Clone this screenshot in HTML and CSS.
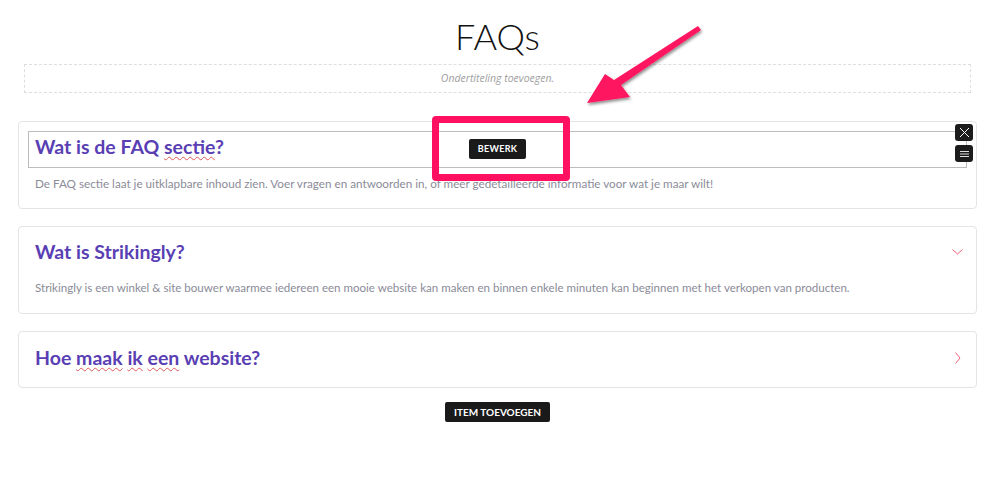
FILE: index.html
```html
<!DOCTYPE html>
<html lang="nl">
<head>
<meta charset="utf-8">
<title>FAQs</title>
<link rel="stylesheet" href="styles.css">
</head>
<body>
<div class="page">
  <h1 class="title">FAQs</h1>
  <div class="subtitle">Ondertiteling toevoegen.</div>

  <div class="list">
    <div class="card card-active">
      <div class="edit-box">
        <h2 class="q">Wat is de FAQ <span class="typo">sectie</span>?</h2>
        <span class="btn bewerk">BEWERK</span>
      </div>
      <p class="a">De FAQ sectie laat je uitklapbare inhoud zien. Voer vragen en antwoorden in, of meer gedetailleerde informatie voor wat je maar wilt!</p>
      <div class="tools">
        <span class="tool"><svg width="11" height="11" viewBox="0 0 11 11"><path d="M1 1L10 10M10 1L1 10" stroke="#fff" stroke-width="1"/></svg></span>
        <span class="tool"><svg width="9" height="8" viewBox="0 0 9 8"><path d="M0 1.5H9M0 4H9M0 6.5H9" stroke="#ddd" stroke-width="1.2"/></svg></span>
      </div>
      <div class="highlight"></div>
    </div>

    <div class="card card-open">
      <div class="row">
        <h2 class="q">Wat is Strikingly?</h2>
        <svg class="chev" width="11" height="6" viewBox="0 0 11 6"><path d="M0.5 0.5L5.5 5L10.5 0.5" fill="none" stroke="#f0607a" stroke-width="1"/></svg>
      </div>
      <p class="a">Strikingly is een winkel &amp; site bouwer waarmee iedereen een mooie website kan maken en binnen enkele minuten kan beginnen met het verkopen van producten.</p>
    </div>

    <div class="card card-closed">
      <div class="row">
        <h2 class="q">Hoe <span class="typo">maak</span> <span class="typo">ik</span> <span class="typo">een</span> website?</h2>
        <svg class="chev" width="6" height="12" viewBox="0 0 6 12"><path d="M0.5 0.5L5 6L0.5 11.5" fill="none" stroke="#f0607a" stroke-width="1"/></svg>
      </div>
    </div>
  </div>

  <div class="add-wrap"><span class="btn add">ITEM TOEVOEGEN</span></div>

  <svg class="arrow" width="140" height="100" viewBox="0 0 140 100">
    <defs>
      <filter id="sh" x="-20%" y="-20%" width="140%" height="140%">
        <feDropShadow dx="1" dy="2" stdDeviation="1.5" flood-color="#000" flood-opacity="0.45"/>
      </filter>
    </defs>
    <path d="M114 8 L117 12 L37 67 L46 79 L3 85 L21 56 L30 62 Z" fill="#ff1560" filter="url(#sh)"/>
  </svg>
</div>
</body>
</html>
```

FILE: styles.css
```css
* { box-sizing: border-box; }
html, body { margin: 0; padding: 0; background: #fff; }
body { font-family: "Lato", "Open Sans", sans-serif; }

.page {
  position: relative;
  width: 998px;
  height: 477px;
  padding: 0 21px 0 18px;
}

.title {
  margin: 0;
  padding-top: 14px;
  height: 64px;
  text-align: center;
  font-family: "Lato", sans-serif;
  font-weight: 300;
  font-size: 36px;
  line-height: 44px;
  color: #111;
}

.subtitle {
  margin: 0 6px;
  height: 29px;
  border: 1px dashed #dedede;
  text-align: center;
  font-family: "Open Sans", sans-serif;
  font-style: italic;
  font-weight: 400;
  font-size: 10.5px;
  line-height: 27px;
  color: #a0a0a0;
}

.list {
  margin-top: 28px;
  display: flex;
  flex-direction: column;
  gap: 17px;
}

.card {
  position: relative;
  border: 1px solid #e4e4e4;
  border-radius: 4px;
}

.card-active { padding: 9px 9px 0 9px; height: 88px; }
.card-open { padding: 12px 16px 0 16px; height: 88px; }
.card-closed { height: 57px; padding: 0 16px; }

.edit-box {
  position: relative;
  height: 37px;
  border: 1px solid #bdbdbd;
  display: flex;
  align-items: center;
  padding: 0 6px 5px 6px;
}

.row {
  display: flex;
  align-items: center;
  justify-content: space-between;
  height: 26px;
}
.card-closed .row { height: 52px; }

.q {
  margin: 0;
  font-family: "Lato", sans-serif;
  font-weight: 700;
  font-size: 19.5px;
  line-height: 24px;
  color: #5a3fb4;
}

.typo {
  text-decoration: underline wavy #e05a5a;
  text-decoration-thickness: 1px;
  text-underline-offset: 2px;
}

.a {
  margin: 0;
  font-family: "Lato", sans-serif;
  font-size: 11.7px;
  line-height: 16px;
  color: #8b8b98;
}
.card-active .a { margin-top: 7px; padding-left: 7px; }
.card-open .a { margin-top: 15px; font-size: 11.55px; }

.chev { margin-right: -3px; }
.card-closed .chev { margin-right: -1px; }

.btn {
  display: inline-block;
  background: #1a1a1a;
  color: #fff;
  border-radius: 2px;
  font-family: "Lato", sans-serif;
  font-weight: 700;
  font-size: 9px;
  letter-spacing: 0.3px;
}

.bewerk {
  position: absolute;
  left: 440px;
  top: 7px;
  width: 57px;
  height: 20px;
  line-height: 20px;
  text-align: center;
}

.tools {
  position: absolute;
  right: 3px;
  top: 2px;
  display: flex;
  flex-direction: column;
  gap: 4px;
}
.tool {
  width: 18px;
  height: 17px;
  border-radius: 3px;
  background: #1c1c1c;
  display: flex;
  align-items: center;
  justify-content: center;
}

.highlight {
  position: absolute;
  left: 413px;
  top: -6px;
  width: 138px;
  height: 65px;
  border: 7px solid #ff1060;
  border-radius: 4px;
}

.add-wrap {
  margin-top: 14px;
  display: flex;
  justify-content: center;
}
.add {
  width: 105px;
  height: 20px;
  line-height: 20px;
  text-align: center;
  font-size: 10px;
  font-weight: 700;
  letter-spacing: 0;
}

.arrow {
  position: absolute;
  left: 584px;
  top: 18px;
}
```
